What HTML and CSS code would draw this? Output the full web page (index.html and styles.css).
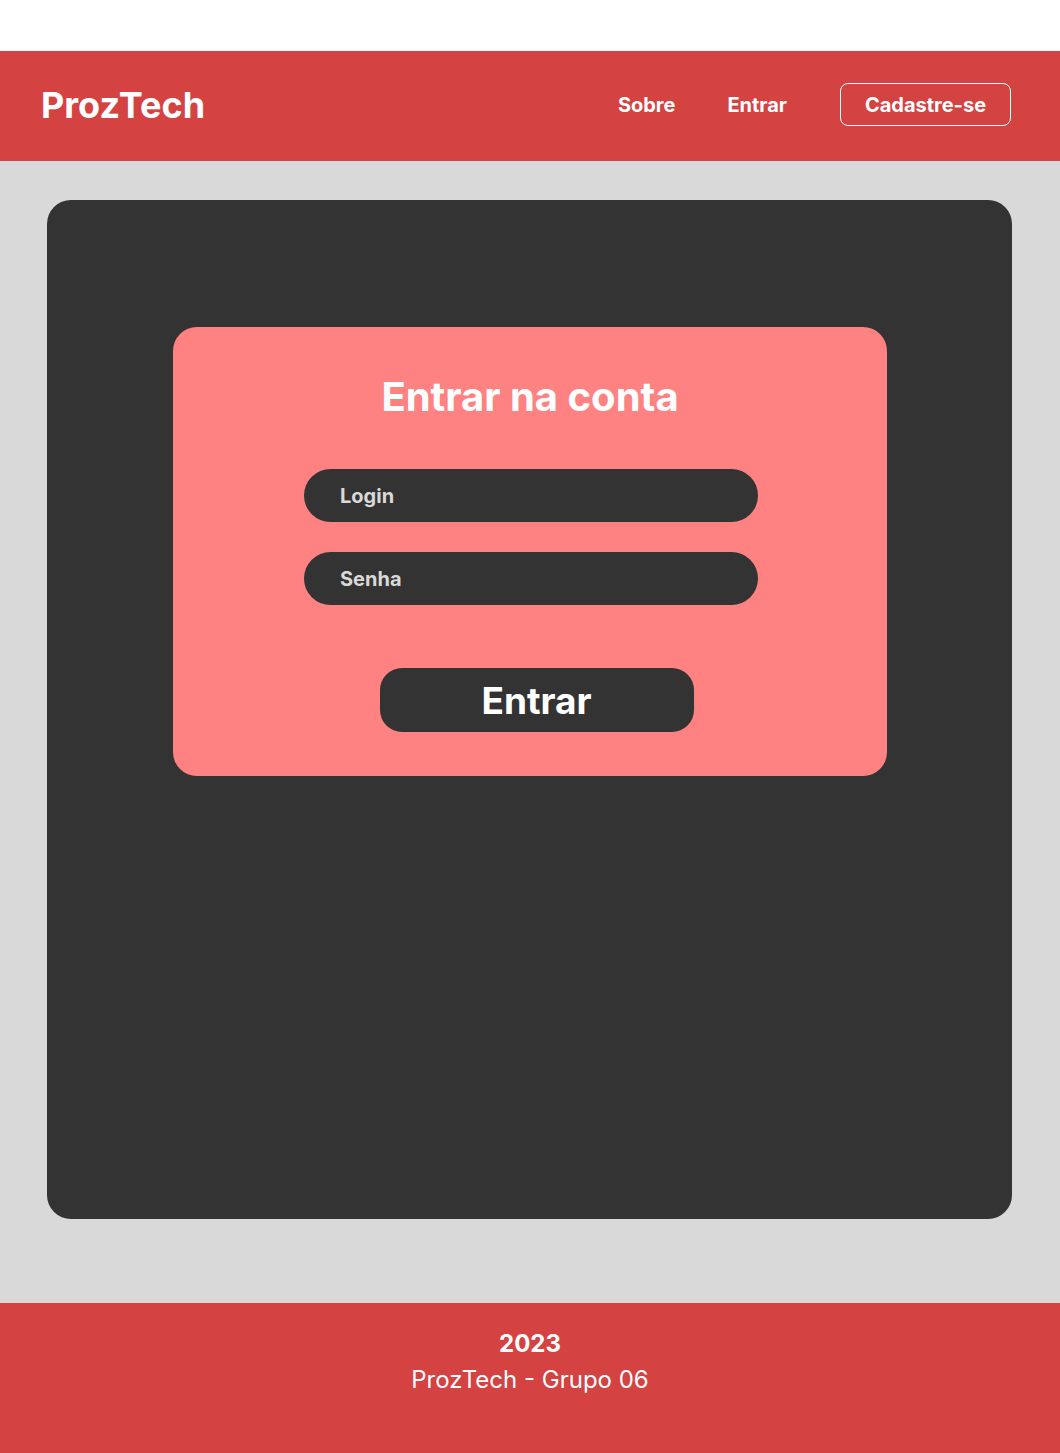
FILE: index.html
```html
<!DOCTYPE html>
<html lang="pt-BR">
<head>
<meta charset="utf-8">
<title>ProzTech - Entrar</title>
<link rel="stylesheet" href="styles.css">
</head>
<body>
<div class="top-space"></div>
<header class="header">
  <div class="logo">ProzTech</div>
  <nav class="nav">
    <a class="nav-link" href="#">Sobre</a>
    <a class="nav-link" href="#">Entrar</a>
    <a class="nav-btn" href="#">Cadastre-se</a>
  </nav>
</header>
<main class="main">
  <section class="panel">
    <form class="login-card">
      <h1 class="login-title">Entrar na conta</h1>
      <div class="field">Login</div>
      <div class="field">Senha</div>
      <button class="submit" type="button">Entrar</button>
    </form>
  </section>
</main>
<footer class="footer">
  <div class="year">2023</div>
  <div class="group">ProzTech - Grupo 06</div>
</footer>
</body>
</html>
```
FILE: styles.css
```css
* { box-sizing: border-box; }
html, body { margin: 0; padding: 0; }
body {
  font-family: Inter, "Noto Sans", sans-serif;
  background: #d9d9d9;
  width: 1060px;
}
.top-space { height: 51px; background: #ffffff; }
.header {
  height: 110px;
  background: #d44242;
  display: flex;
  align-items: center;
  justify-content: space-between;
  padding: 0 49px 0 41px;
}
.logo {
  color: #fff;
  font-weight: 700;
  font-size: 36px;
  letter-spacing: 0;
  margin-bottom: 2px;
}
.nav { display: flex; align-items: center; margin-bottom: 3px; }
.nav-link {
  color: #fff;
  text-decoration: none;
  font-weight: 700;
  font-size: 20px;
  margin-right: 52px;
}
.nav-link + .nav-link { margin-right: 53px; }
.nav-btn {
  color: #fff;
  text-decoration: none;
  font-weight: 700;
  font-size: 20px;
  border: 1px solid #fff;
  border-radius: 8px;
  width: 171px;
  height: 43px;
  display: flex;
  align-items: center;
  justify-content: center;
}
.main {
  padding: 39px 48px 84px 47px;
}
.panel {
  background: #333333;
  border-radius: 24px;
  height: 1019px;
  padding-top: 127px;
  display: flex;
  flex-direction: column;
  align-items: center;
}
.login-card {
  background: #ff8282;
  border-radius: 24px;
  width: 714px;
  height: 449px;
  margin: 0 0 0 1px;
  display: flex;
  flex-direction: column;
  align-items: center;
  padding-top: 46px;
}
.login-title {
  margin: 0 0 48px 0;
  color: #fff;
  font-weight: 700;
  font-size: 40px;
  line-height: 48px;
  height: 48px;
}
.field {
  width: 454px;
  height: 53px;
  border-radius: 27px;
  background: #333333;
  color: #d9d9d9;
  font-weight: 700;
  font-size: 20px;
  display: flex;
  align-items: center;
  padding-left: 36px;
  margin-bottom: 30px;
  margin-left: 2px;
}
.submit {
  margin-top: 33px;
  width: 314px;
  height: 64px;
  border: none;
  border-radius: 22px;
  background: #333333;
  color: #fff;
  font-family: Inter, "Noto Sans", sans-serif;
  font-weight: 700;
  font-size: 37px;
  margin-left: 13px;
}
.footer {
  height: 150px;
  background: #d44242;
  color: #fff;
  display: flex;
  flex-direction: column;
  align-items: center;
  padding-top: 26px;
}
.year { font-weight: 700; font-size: 24px; line-height: 30px; }
.group { font-weight: 400; font-size: 24px; line-height: 30px; margin-top: 6px; }
```
